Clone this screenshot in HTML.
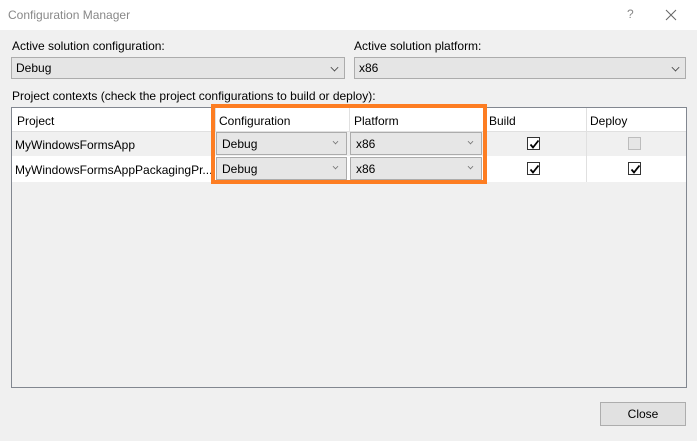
<!DOCTYPE html>
<html><head><style>
*{margin:0;padding:0;box-sizing:border-box}
body{width:697px;height:441px;background:#f0f0f0;font-family:"Liberation Sans",sans-serif;font-size:12px;color:#000;position:relative;overflow:hidden}
.a{position:absolute}
.title{left:0;top:0;width:697px;height:30px;background:#fff}
.combo{background:#e5e5e5;border:1px solid #acacac;height:22px;padding:3px 0 0 4px}
.chev{position:absolute;right:6px;top:6px;width:7px;height:7px;border-right:1px solid #444;border-bottom:1px solid #444;transform:rotate(45deg) scale(.8)}
.cell{position:absolute;white-space:nowrap}
.cb{position:absolute;width:13px;height:13px;border:1px solid #333;background:#fff}
.cb svg{position:absolute;left:1px;top:1px}
.gc{background:#e6e6e6;border:1px solid #acacac;height:23px;padding:4px 0 0 5px}
.gc .chev{top:6px;width:5px;height:5px;right:8px;border-color:#777}
</style></head><body>
<div class="a title"></div>
<div class="a" style="left:8px;top:8px;color:#888;font-size:12px">Configuration Manager</div>
<div class="a" style="left:627px;top:7px;color:#888">?</div>
<svg class="a" style="left:665px;top:9px" width="12" height="12"><path d="M1 1L11 11M11 1L1 11" stroke="#666" stroke-width="1"/></svg>

<div class="a" style="left:12px;top:39px">Active solution configuration:</div>
<div class="a combo" style="left:11px;top:57px;width:334px">Debug<span class="chev"></span></div>
<div class="a" style="left:354px;top:39px">Active solution platform:</div>
<div class="a combo" style="left:354px;top:57px;width:332px">x86<span class="chev"></span></div>
<div class="a" style="left:12px;top:89px">Project contexts (check the project configurations to build or deploy):</div>

<div class="a" style="left:11px;top:107px;width:676px;height:281px;border:1px solid #828790;background:#f0f0f0">
 <div class="a" style="left:0;top:0;width:674px;height:24px;background:#fff;border-bottom:1px solid #e0e0e0"></div>
 <div class="a" style="left:0;top:24px;width:674px;height:25px;background:#f0f0f0;border-bottom:1px solid #fff"></div>
 <div class="a" style="left:0;top:49px;width:674px;height:25px;background:#fff"></div>
 <div class="a" style="left:203px;top:0;width:1px;height:24px;background:#e0e0e0"></div>
 <div class="a" style="left:337px;top:0;width:1px;height:24px;background:#e0e0e0"></div>
 <div class="a" style="left:473px;top:0;width:1px;height:74px;background:#e0e0e0"></div>
 <div class="a" style="left:574px;top:0;width:1px;height:74px;background:#e0e0e0"></div>
</div>
<div class="cell" style="left:17px;top:114px">Project</div>
<div class="cell" style="left:219px;top:114px">Configuration</div>
<div class="cell" style="left:354px;top:114px">Platform</div>
<div class="cell" style="left:489px;top:114px">Build</div>
<div class="cell" style="left:590px;top:114px">Deploy</div>
<div class="cell" style="left:15px;top:138px">MyWindowsFormsApp</div>
<div class="cell" style="left:15px;top:163px">MyWindowsFormsAppPackagingPr...</div>

<div class="a gc" style="left:216px;top:132px;width:131px">Debug<span class="chev"></span></div>
<div class="a gc" style="left:216px;top:157px;width:131px">Debug<span class="chev"></span></div>
<div class="a gc" style="left:350px;top:132px;width:132px">x86<span class="chev"></span></div>
<div class="a gc" style="left:350px;top:157px;width:132px">x86<span class="chev"></span></div>

<div class="cb" style="left:527px;top:137px"><svg width="11" height="11"><path d="M1.5 5.5L4 8.5L9.5 1.5" stroke="#000" stroke-width="1.8" fill="none"/></svg></div>
<div class="cb" style="left:527px;top:162px"><svg width="11" height="11"><path d="M1.5 5.5L4 8.5L9.5 1.5" stroke="#000" stroke-width="1.8" fill="none"/></svg></div>
<div class="cb" style="left:628px;top:137px;border-color:#bcbcbc;background:#e6e6e6"></div>
<div class="cb" style="left:628px;top:162px"><svg width="11" height="11"><path d="M1.5 5.5L4 8.5L9.5 1.5" stroke="#000" stroke-width="1.8" fill="none"/></svg></div>

<div class="a" style="left:211px;top:104px;width:276px;height:80px;border:4px solid #fd7d22"></div>

<div class="a" style="left:600px;top:402px;width:86px;height:24px;background:#e1e1e1;border:1px solid #adadad;text-align:center;padding-top:4px">Close</div>
</body></html>
